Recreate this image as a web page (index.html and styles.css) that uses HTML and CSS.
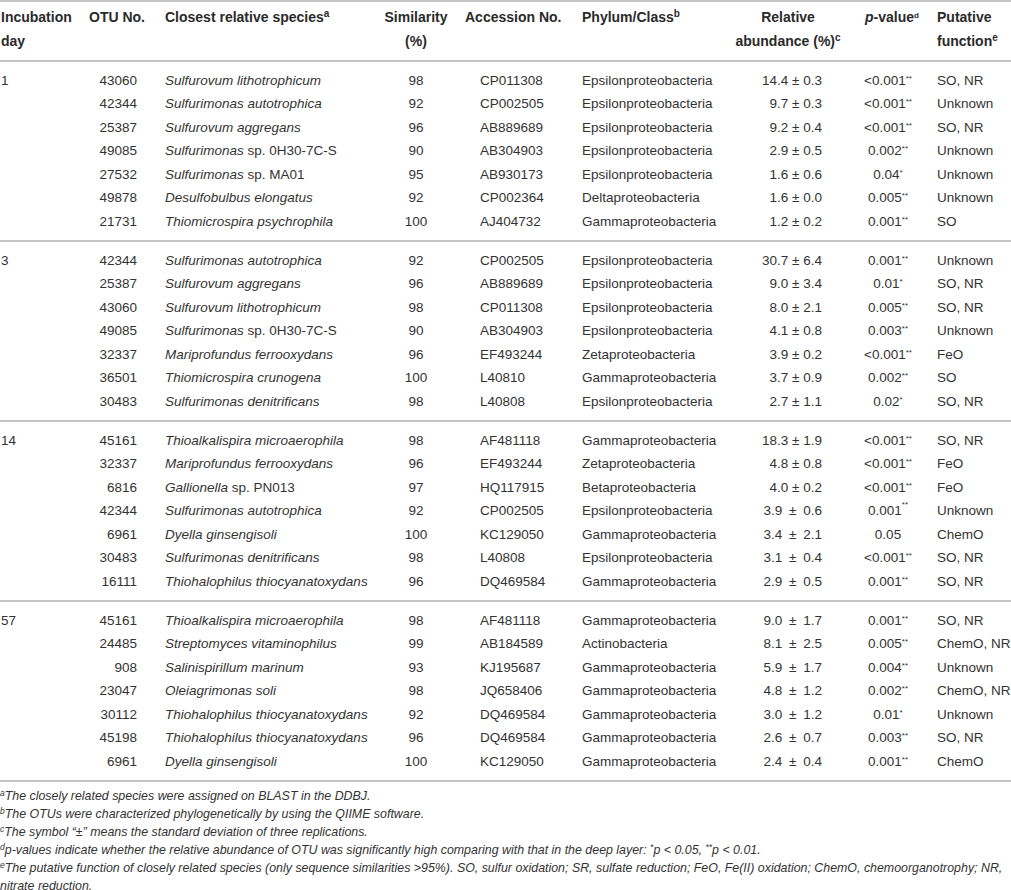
FILE: index.html
```html
<!DOCTYPE html>
<html lang="en">
<head>
    <meta charset="UTF-8">
    <title>OTU table</title>
    <link rel="stylesheet" href="styles.css">
</head>
<body>
    <table class="tbl">
        <colgroup>
            <col class="c-day">
            <col class="c-otu">
            <col class="c-sp">
            <col class="c-sim">
            <col class="c-acc">
            <col class="c-phy">
            <col class="c-ab">
            <col class="c-pv">
            <col class="c-fn">
        </colgroup>
        <thead>
            <tr>
                <th class="day">Incubation<br>day</th>
                <th class="otu">OTU No.</th>
                <th class="sp">Closest relative species<sup>a</sup></th>
                <th class="sim">Similarity<br>(%)</th>
                <th class="acc">Accession No.</th>
                <th class="phy">Phylum/Class<sup>b</sup></th>
                <th class="ab">Relative<br>abundance (%)<sup>c</sup></th>
                <th class="pv"><i>p</i>-value<sup>d</sup></th>
                <th class="fn">Putative<br>function<sup>e</sup></th>
            </tr>
        </thead>
        <tbody>
            <tr class="first">
                <td class="day">1</td><td class="otu">43060</td><td class="sp"><i>Sulfurovum lithotrophicum</i></td><td class="sim">98</td><td class="acc">CP011308</td><td class="phy">Epsilonproteobacteria</td><td class="ab">14.4 ± 0.3</td><td class="pv">&lt;0.001<sup>**</sup></td><td class="fn">SO, NR</td>
            </tr>
            <tr>
                <td class="day"></td><td class="otu">42344</td><td class="sp"><i>Sulfurimonas autotrophica</i></td><td class="sim">92</td><td class="acc">CP002505</td><td class="phy">Epsilonproteobacteria</td><td class="ab">9.7 ± 0.3</td><td class="pv">&lt;0.001<sup>**</sup></td><td class="fn">Unknown</td>
            </tr>
            <tr>
                <td class="day"></td><td class="otu">25387</td><td class="sp"><i>Sulfurovum aggregans</i></td><td class="sim">96</td><td class="acc">AB889689</td><td class="phy">Epsilonproteobacteria</td><td class="ab">9.2 ± 0.4</td><td class="pv">&lt;0.001<sup>**</sup></td><td class="fn">SO, NR</td>
            </tr>
            <tr>
                <td class="day"></td><td class="otu">49085</td><td class="sp"><i>Sulfurimonas</i> sp. 0H30-7C-S</td><td class="sim">90</td><td class="acc">AB304903</td><td class="phy">Epsilonproteobacteria</td><td class="ab">2.9 ± 0.5</td><td class="pv">0.002<sup>**</sup></td><td class="fn">Unknown</td>
            </tr>
            <tr>
                <td class="day"></td><td class="otu">27532</td><td class="sp"><i>Sulfurimonas</i> sp. MA01</td><td class="sim">95</td><td class="acc">AB930173</td><td class="phy">Epsilonproteobacteria</td><td class="ab">1.6 ± 0.6</td><td class="pv">0.04<sup>*</sup></td><td class="fn">Unknown</td>
            </tr>
            <tr>
                <td class="day"></td><td class="otu">49878</td><td class="sp"><i>Desulfobulbus elongatus</i></td><td class="sim">92</td><td class="acc">CP002364</td><td class="phy">Deltaproteobacteria</td><td class="ab">1.6 ± 0.0</td><td class="pv">0.005<sup>**</sup></td><td class="fn">Unknown</td>
            </tr>
            <tr class="last">
                <td class="day"></td><td class="otu">21731</td><td class="sp"><i>Thiomicrospira psychrophila</i></td><td class="sim">100</td><td class="acc">AJ404732</td><td class="phy">Gammaproteobacteria</td><td class="ab">1.2 ± 0.2</td><td class="pv">0.001<sup>**</sup></td><td class="fn">SO</td>
            </tr>
        </tbody>
        <tbody>
            <tr class="first">
                <td class="day">3</td><td class="otu">42344</td><td class="sp"><i>Sulfurimonas autotrophica</i></td><td class="sim">92</td><td class="acc">CP002505</td><td class="phy">Epsilonproteobacteria</td><td class="ab">30.7 ± 6.4</td><td class="pv">0.001<sup>**</sup></td><td class="fn">Unknown</td>
            </tr>
            <tr>
                <td class="day"></td><td class="otu">25387</td><td class="sp"><i>Sulfurovum aggregans</i></td><td class="sim">96</td><td class="acc">AB889689</td><td class="phy">Epsilonproteobacteria</td><td class="ab">9.0 ± 3.4</td><td class="pv">0.01<sup>*</sup></td><td class="fn">SO, NR</td>
            </tr>
            <tr>
                <td class="day"></td><td class="otu">43060</td><td class="sp"><i>Sulfurovum lithotrophicum</i></td><td class="sim">98</td><td class="acc">CP011308</td><td class="phy">Epsilonproteobacteria</td><td class="ab">8.0 ± 2.1</td><td class="pv">0.005<sup>**</sup></td><td class="fn">SO, NR</td>
            </tr>
            <tr>
                <td class="day"></td><td class="otu">49085</td><td class="sp"><i>Sulfurimonas</i> sp. 0H30-7C-S</td><td class="sim">90</td><td class="acc">AB304903</td><td class="phy">Epsilonproteobacteria</td><td class="ab">4.1 ± 0.8</td><td class="pv">0.003<sup>**</sup></td><td class="fn">Unknown</td>
            </tr>
            <tr>
                <td class="day"></td><td class="otu">32337</td><td class="sp"><i>Mariprofundus ferrooxydans</i></td><td class="sim">96</td><td class="acc">EF493244</td><td class="phy">Zetaproteobacteria</td><td class="ab">3.9 ± 0.2</td><td class="pv">&lt;0.001<sup>**</sup></td><td class="fn">FeO</td>
            </tr>
            <tr>
                <td class="day"></td><td class="otu">36501</td><td class="sp"><i>Thiomicrospira crunogena</i></td><td class="sim">100</td><td class="acc">L40810</td><td class="phy">Gammaproteobacteria</td><td class="ab">3.7 ± 0.9</td><td class="pv">0.002<sup>**</sup></td><td class="fn">SO</td>
            </tr>
            <tr class="last">
                <td class="day"></td><td class="otu">30483</td><td class="sp"><i>Sulfurimonas denitrificans</i></td><td class="sim">98</td><td class="acc">L40808</td><td class="phy">Epsilonproteobacteria</td><td class="ab">2.7 ± 1.1</td><td class="pv">0.02<sup>*</sup></td><td class="fn">SO, NR</td>
            </tr>
        </tbody>
        <tbody>
            <tr class="first">
                <td class="day">14</td><td class="otu">45161</td><td class="sp"><i>Thioalkalispira microaerophila</i></td><td class="sim">98</td><td class="acc">AF481118</td><td class="phy">Gammaproteobacteria</td><td class="ab">18.3 ± 1.9</td><td class="pv">&lt;0.001<sup>**</sup></td><td class="fn">SO, NR</td>
            </tr>
            <tr>
                <td class="day"></td><td class="otu">32337</td><td class="sp"><i>Mariprofundus ferrooxydans</i></td><td class="sim">96</td><td class="acc">EF493244</td><td class="phy">Zetaproteobacteria</td><td class="ab">4.8 ± 0.8</td><td class="pv">&lt;0.001<sup>**</sup></td><td class="fn">FeO</td>
            </tr>
            <tr>
                <td class="day"></td><td class="otu">6816</td><td class="sp"><i>Gallionella</i> sp. PN013</td><td class="sim">97</td><td class="acc">HQ117915</td><td class="phy">Betaproteobacteria</td><td class="ab">4.0 ± 0.2</td><td class="pv">&lt;0.001<sup>**</sup></td><td class="fn">FeO</td>
            </tr>
            <tr>
                <td class="day"></td><td class="otu">42344</td><td class="sp"><i>Sulfurimonas autotrophica</i></td><td class="sim">92</td><td class="acc">CP002505</td><td class="phy">Epsilonproteobacteria</td><td class="ab wide">3.9 ± 0.6</td><td class="pv">0.001<sup class="hi">**</sup></td><td class="fn">Unknown</td>
            </tr>
            <tr>
                <td class="day"></td><td class="otu">6961</td><td class="sp"><i>Dyella ginsengisoli</i></td><td class="sim">100</td><td class="acc">KC129050</td><td class="phy">Gammaproteobacteria</td><td class="ab wide">3.4 ± 2.1</td><td class="pv">0.05</td><td class="fn">ChemO</td>
            </tr>
            <tr>
                <td class="day"></td><td class="otu">30483</td><td class="sp"><i>Sulfurimonas denitrificans</i></td><td class="sim">98</td><td class="acc">L40808</td><td class="phy">Epsilonproteobacteria</td><td class="ab wide">3.1 ± 0.4</td><td class="pv">&lt;0.001<sup>**</sup></td><td class="fn">SO, NR</td>
            </tr>
            <tr class="last">
                <td class="day"></td><td class="otu">16111</td><td class="sp"><i>Thiohalophilus thiocyanatoxydans</i></td><td class="sim">96</td><td class="acc">DQ469584</td><td class="phy">Gammaproteobacteria</td><td class="ab wide">2.9 ± 0.5</td><td class="pv">0.001<sup>**</sup></td><td class="fn">SO, NR</td>
            </tr>
        </tbody>
        <tbody>
            <tr class="first">
                <td class="day">57</td><td class="otu">45161</td><td class="sp"><i>Thioalkalispira microaerophila</i></td><td class="sim">98</td><td class="acc">AF481118</td><td class="phy">Gammaproteobacteria</td><td class="ab wide">9.0 ± 1.7</td><td class="pv">0.001<sup>**</sup></td><td class="fn">SO, NR</td>
            </tr>
            <tr>
                <td class="day"></td><td class="otu">24485</td><td class="sp"><i>Streptomyces vitaminophilus</i></td><td class="sim">99</td><td class="acc">AB184589</td><td class="phy">Actinobacteria</td><td class="ab wide">8.1 ± 2.5</td><td class="pv">0.005<sup>**</sup></td><td class="fn">ChemO, NR</td>
            </tr>
            <tr>
                <td class="day"></td><td class="otu">908</td><td class="sp"><i>Salinispirillum marinum</i></td><td class="sim">93</td><td class="acc">KJ195687</td><td class="phy">Gammaproteobacteria</td><td class="ab wide">5.9 ± 1.7</td><td class="pv">0.004<sup>**</sup></td><td class="fn">Unknown</td>
            </tr>
            <tr>
                <td class="day"></td><td class="otu">23047</td><td class="sp"><i>Oleiagrimonas soli</i></td><td class="sim">98</td><td class="acc">JQ658406</td><td class="phy">Gammaproteobacteria</td><td class="ab wide">4.8 ± 1.2</td><td class="pv">0.002<sup>**</sup></td><td class="fn">ChemO, NR</td>
            </tr>
            <tr>
                <td class="day"></td><td class="otu">30112</td><td class="sp"><i>Thiohalophilus thiocyanatoxydans</i></td><td class="sim">92</td><td class="acc">DQ469584</td><td class="phy">Gammaproteobacteria</td><td class="ab wide">3.0 ± 1.2</td><td class="pv">0.01<sup>*</sup></td><td class="fn">Unknown</td>
            </tr>
            <tr>
                <td class="day"></td><td class="otu">45198</td><td class="sp"><i>Thiohalophilus thiocyanatoxydans</i></td><td class="sim">96</td><td class="acc">DQ469584</td><td class="phy">Gammaproteobacteria</td><td class="ab wide">2.6 ± 0.7</td><td class="pv">0.003<sup>**</sup></td><td class="fn">SO, NR</td>
            </tr>
            <tr class="last">
                <td class="day"></td><td class="otu">6961</td><td class="sp"><i>Dyella ginsengisoli</i></td><td class="sim">100</td><td class="acc">KC129050</td><td class="phy">Gammaproteobacteria</td><td class="ab wide">2.4 ± 0.4</td><td class="pv">0.001<sup>**</sup></td><td class="fn">ChemO</td>
            </tr>
        </tbody>
    </table>
    <div class="notes">
        <p><sup>a</sup>The closely related species were assigned on BLAST in the DDBJ.</p>
        <p><sup>b</sup>The OTUs were characterized phylogenetically by using the QIIME software.</p>
        <p><sup>c</sup>The symbol “±” means the standard deviation of three replications.</p>
        <p><sup>d</sup>p-values indicate whether the relative abundance of OTU was significantly high comparing with that in the deep layer: <sup>*</sup>p &lt; 0.05, <sup>**</sup>p &lt; 0.01.</p>
        <p><sup>e</sup>The putative function of closely related species (only sequence similarities &gt;95%). SO, sulfur oxidation; SR, sulfate reduction; FeO, Fe(II) oxidation; ChemO, chemoorganotrophy; NR, nitrate reduction.</p>
    </div>
</body>
</html>
```

FILE: styles.css
```css
*{
    margin: 0;
    padding: 0;
}
body{
    background-color: #fff;
    color: #333;
    font-family: "Liberation Sans", Arial, sans-serif;
    width: 1011px;
}
.tbl{
    width: 1011px;
    table-layout: fixed;
    border-collapse: separate;
    border-spacing: 0;
    font-size: 13.5px;
}
.c-day{ width: 80px; }
.c-otu{ width: 75px; }
.c-sp{ width: 215px; }
.c-sim{ width: 92px; }
.c-acc{ width: 108px; }
.c-phy{ width: 150px; }
.c-ab{ width: 125px; }
.c-pv{ width: 86px; }
.c-fn{ width: 80px; }

.tbl th{
    color: #2a2a2a;
    font-size: 14px;
    font-weight: bold;
    line-height: 24px;
    vertical-align: top;
    text-align: left;
    white-space: nowrap;
    padding-top: 3px;
    padding-bottom: 7px;
    border-top: 2px solid #c4c4c4;
}
.tbl td{
    line-height: 23.5px;
    white-space: nowrap;
}
.tbl tr.first td{
    border-top: 2px solid #c4c4c4;
    padding-top: 6.5px;
}
.tbl tr.last td{
    padding-bottom: 7px;
}
.tbl tbody:last-child tr.last td{
    border-bottom: 2px solid #c4c4c4;
}
.tbl sup{
    font-size: 9px;
    line-height: 0;
    vertical-align: 5px;
}
.tbl th sup{
    font-size: 10px;
}
.tbl .pv sup{
    font-size: 8px;
    vertical-align: 4px;
}
.tbl .pv sup.hi{
    vertical-align: 8px;
}

th.day, td.day{ padding-left: 1px; }
th.otu{ padding-left: 9px; }
td.otu{ text-align: right; padding-right: 18px; }
.sp{ padding-left: 10px; }
th.sim, td.sim{ text-align: center; }
th.acc{ padding-left: 3px; }
td.acc{ padding-left: 18px; }
.phy{ padding-left: 12px; }
th.ab{ text-align: center; padding-left: 11px; }
td.ab{ text-align: right; padding-right: 23px; }
td.ab.wide{ word-spacing: 3px; }
th.pv{ padding-left: 20px; }
td.pv{ text-align: center; }
.fn{ padding-left: 6px; }

.notes{
    padding-top: 5px;
    font-size: 12.4px;
    font-style: italic;
    line-height: 18px;
}
.notes sup{
    font-size: 8.5px;
    line-height: 0;
    vertical-align: 4px;
}
```
